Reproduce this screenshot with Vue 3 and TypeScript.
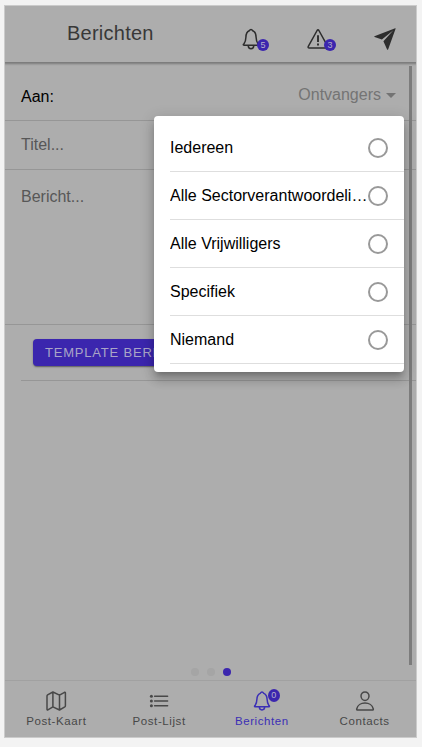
<script setup lang="ts">
import { ref } from 'vue'

interface Tab {
  label: string
  icon: 'map' | 'list' | 'bell' | 'person'
  badge?: number
}

const options: string[] = [
  'Iedereen',
  'Alle Sectorverantwoordelijken',
  'Alle Vrijwilligers',
  'Specifiek',
  'Niemand',
]
const selected = ref<string | null>(null)

const tabs: Tab[] = [
  { label: 'Post-Kaart', icon: 'map' },
  { label: 'Post-Lijst', icon: 'list' },
  { label: 'Berichten', icon: 'bell', badge: 0 },
  { label: 'Contacts', icon: 'person' },
]
const activeTab = ref<number>(2)
</script>

<template>
  <div class="page">
    <div class="device">
      <header class="toolbar">
        <h1>Berichten</h1>
        <div class="actions">
          <span class="action bell">
            <svg viewBox="0 0 18 22" width="18" height="22" class="line">
              <path d="M2 15.8C3.4 13.8 3.8 12.6 3.9 9.2C4 5.3 5.4 3.6 7.2 2.8Q9 .2 10.8 2.8C12.6 3.6 14 5.3 14.1 9.2C14.2 12.6 14.6 13.8 16 15.8Q17.5 17.2 16 17.2H2Q.5 17.2 2 15.8ZM6.2 17.6C6.3 21.8 11.7 21.8 11.8 17.6" />
            </svg>
            <b class="badge">5</b>
          </span>
          <span class="action warning">
            <svg viewBox="0 0 22 22" width="22" height="22" class="line">
              <path d="M10.1 2.5Q11 1.2 11.9 2.5L20.7 18.3Q21.4 20 19.7 20H2.3Q.6 20 1.3 18.3Z" />
              <path d="M11 7.2V14M11 15.4V17.4" class="mark" />
            </svg>
            <b class="badge">3</b>
          </span>
          <svg viewBox="0 0 22 22" width="22" height="22" class="plane">
            <path d="M.4 8.3L21.2.3Q21.8.1 21.5.9L14.2 21.2Q13.5 22.4 13 21.2L9.4 13.2L19.4 2.2L7.9 11.5L.6 8.9Q-.1 8.6.4 8.3Z" />
          </svg>
        </div>
      </header>

      <main class="content">
        <div class="row recipients">
          <span class="label">Aan:</span>
          <span class="select">Ontvangers<i class="caret"></i></span>
        </div>
        <div class="row title">Titel...</div>
        <div class="row message">Bericht...</div>
        <div class="row template">
          <button type="button">TEMPLATE BERICHTEN</button>
        </div>
        <div class="dots"><i></i><i></i><i class="on"></i></div>
        <div class="scrollbar"></div>
      </main>

      <nav class="tabs">
        <div
          v-for="(tab, i) in tabs"
          :key="tab.label"
          class="tab"
          :class="{ active: i === activeTab }"
          @click="activeTab = i"
        >
          <span class="tab-icon">
            <svg v-if="tab.icon === 'map'" viewBox="0 0 22 22" width="22" height="22" class="line">
              <path d="M2 6Q2 5.3 2.6 4.9L7.9 2L14.5 5.1L19.5 2.3Q20.4 2 20.4 3V15.8Q20.4 16.5 19.8 16.9L14.5 20L7.9 16.8L2.9 19.8Q2 20.2 2 19.2ZM7.9 2V16.8M14.5 5.1V20" />
            </svg>
            <svg v-else-if="tab.icon === 'list'" viewBox="0 0 22 22" width="22" height="22" class="line">
              <path d="M6.6 6.3H19.6M6.6 11H19.6M6.6 15.7H19.6" />
              <g class="bullets">
                <circle cx="3.4" cy="6.3" r="1.5" />
                <circle cx="3.4" cy="11" r="1.5" />
                <circle cx="3.4" cy="15.7" r="1.5" />
              </g>
            </svg>
            <svg v-else-if="tab.icon === 'bell'" viewBox="0 0 22 22" width="22" height="22" class="line">
              <path d="M4.2 15.4C5.4 13.6 5.8 12.5 5.9 9.3C6 5.8 7.4 4.2 9.2 3.4Q11 .8 12.8 3.4C14.6 4.2 16 5.8 16.1 9.3C16.2 12.5 16.6 13.6 17.8 15.4Q19.2 16.8 17.8 16.8H4.2Q2.8 16.8 4.2 15.4ZM8.3 17.1C8.4 20.9 13.6 20.9 13.7 17.1" />
            </svg>
            <svg v-else viewBox="0 0 22 22" width="22" height="22" class="line">
              <path d="M15 6.3C14.8 8.6 13 10.5 11 10.5S7.2 8.6 7 6.3C6.8 3.9 8.6 2 11 2S15.2 3.9 15 6.3ZM11 13C7.2 13 3.4 15.1 2.7 19Q2.6 20 3.5 20H18.5Q19.4 20 19.3 19C18.6 15.1 14.8 13 11 13Z" />
            </svg>
            <b v-if="tab.badge !== undefined" class="badge">{{ tab.badge }}</b>
          </span>
          <span class="tab-label">{{ tab.label }}</span>
        </div>
      </nav>

      <div class="popover">
        <div v-for="option in options" :key="option" class="option" @click="selected = option">
          <div class="option-inner">
            <span class="option-label">{{ option }}</span>
            <i class="radio" :class="{ checked: selected === option }"></i>
          </div>
        </div>
      </div>
    </div>
  </div>
</template>

<style>
body {
  background: #f3f3f3;
}
</style>

<style scoped>
.page {
  box-sizing: border-box;
  width: 422px;
  height: 747px;
  padding: 5px 5px 9px 4px;
  background: #f3f3f3;
  font-family: "Liberation Sans", Arial, sans-serif;
}
.device {
  position: relative;
  display: flex;
  flex-direction: column;
  box-sizing: border-box;
  height: 733px;
  border: 1px solid #cbcbcb;
  background: #adadad;
}
.toolbar {
  display: flex;
  flex: none;
  justify-content: space-between;
  height: 56px;
  position: relative;
  background: #adadad;
  box-shadow: 0 1px 2px 1px rgba(0, 0, 0, 0.3);
  clip-path: inset(0 0 -8px 0);
}
h1 {
  margin: 0 0 0 62px;
  font-size: 20px;
  font-weight: 400;
  line-height: 55px;
  letter-spacing: 0.24px;
  color: #383838;
}
.actions {
  display: flex;
  padding: 22px 20px 0 0;
  color: #2d2d2d;
}
.action {
  position: relative;
  height: 22px;
}
.bell {
  margin-right: 47px;
}
.warning {
  margin-right: 45px;
}
svg {
  display: block;
}
.line {
  fill: none;
  stroke: currentColor;
  stroke-width: 1.5;
  stroke-linejoin: round;
  stroke-linecap: round;
}
.mark {
  stroke-width: 1.9;
  stroke-linecap: butt;
}
.bullets {
  fill: currentColor;
  stroke: none;
}
.plane {
  fill: #2d2d2d;
}
.badge {
  position: absolute;
  left: 15px;
  top: 11px;
  width: 12px;
  height: 12px;
  border-radius: 50%;
  background: #3b26ae;
  color: #b5b0ca;
  font-size: 9px;
  font-weight: 400;
  line-height: 12px;
  text-align: center;
}
.warning .badge {
  left: 17px;
}
.content {
  position: relative;
  flex: 1;
  padding-top: 10px;
}
.row {
  box-sizing: border-box;
  height: 49px;
  padding-left: 16px;
  border-bottom: 1px solid #969696;
  font-size: 16px;
  color: #575757;
}
.recipients {
  display: flex;
  justify-content: space-between;
  padding-right: 20px;
  line-height: 49px;
}
.label {
  color: #000;
}
.select {
  display: flex;
  align-items: center;
  line-height: 46px;
  height: 46px;
  color: #747474;
}
.caret {
  margin-left: 5px;
  border: 5px solid transparent;
  border-top-color: #737373;
  border-bottom: 0;
}
.title {
  line-height: 47px;
}
.message {
  height: 155px;
  padding-top: 17px;
  line-height: 19px;
}
.template {
  height: 56px;
  margin-left: 16px;
  padding: 14px 0 0 12px;
}
button {
  display: block;
  height: 27px;
  padding: 0 12px;
  border: 0;
  border-radius: 4px;
  background: #3b26ae;
  box-shadow: 0 2px 1px -1px rgba(0, 0, 0, 0.2), 0 1px 2px rgba(0, 0, 0, 0.3);
  color: #a9a5c7;
  font: 13px/27px "Liberation Sans", Arial, sans-serif;
  letter-spacing: 0.8px;
  white-space: nowrap;
}
.dots {
  position: absolute;
  left: 0;
  right: 0;
  bottom: 4px;
  display: flex;
  justify-content: center;
  gap: 8px;
}
.dots i {
  width: 8px;
  height: 8px;
  border-radius: 50%;
  background: #a5a5a5;
}
.dots .on {
  background: #3b26ae;
}
.scrollbar {
  position: absolute;
  top: 4px;
  right: 4px;
  bottom: 15px;
  width: 3px;
  background: #7c7c7c;
}
.tabs {
  display: flex;
  flex: none;
  box-sizing: border-box;
  height: 57px;
  border-top: 1px solid #a1a1a1;
}
.tab {
  display: flex;
  flex: 1;
  flex-direction: column;
  align-items: center;
  padding-top: 9px;
  color: #484848;
}
.tab.active {
  color: #3b2fb5;
}
.tab-icon {
  position: relative;
}
.tab-icon .badge {
  left: 17px;
  top: -1px;
  height: 13px;
  line-height: 13px;
}
.tab-label {
  margin-top: 2px;
  font-size: 11.5px;
  line-height: 14px;
  letter-spacing: 0.6px;
}
.popover {
  position: absolute;
  top: 110px;
  left: 149px;
  box-sizing: border-box;
  width: 250px;
  height: 256px;
  padding: 8px 0;
  border-radius: 4px;
  background: #fff;
  box-shadow: 0 5px 5px -3px rgba(0, 0, 0, 0.2), 0 8px 10px 1px rgba(0, 0, 0, 0.14),
    0 3px 14px 2px rgba(0, 0, 0, 0.12);
}
.option {
  padding-left: 16px;
}
.option-inner {
  display: flex;
  align-items: center;
  box-sizing: border-box;
  height: 48px;
  padding-right: 16px;
  border-bottom: 1px solid #dedede;
}
.option-label {
  flex: 1;
  min-width: 0;
  overflow: hidden;
  text-overflow: ellipsis;
  white-space: nowrap;
  font-size: 16px;
  line-height: 21px;
  color: #000;
}
.radio {
  box-sizing: border-box;
  flex: none;
  width: 20px;
  height: 20px;
  margin-top: 1px;
  border: 2px solid #999;
  border-radius: 50%;
}
.radio.checked {
  border: 6px solid #3b26ae;
}
</style>
